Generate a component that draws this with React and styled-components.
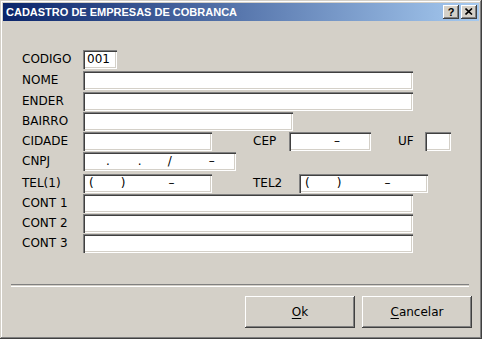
import React from "react";
import styled, { createGlobalStyle } from "styled-components";

const GlobalStyle = createGlobalStyle`
  html, body {
    margin: 0;
    padding: 0;
    background: #d4d0c8;
  }
`;

const Window = styled.div`
  width: 482px;
  height: 339px;
  box-sizing: border-box;
  padding: 3px;
  background: #d4d0c8;
  box-shadow: inset -1px -1px #404040, inset 1px 1px #d4d0c8,
    inset -2px -2px #808080, inset 2px 2px #ffffff;
  display: flex;
  flex-direction: column;
  font-family: "DejaVu Sans", sans-serif;
  font-size: 12px;
  color: #000;
`;

const TitleBar = styled.div`
  height: 18px;
  flex-shrink: 0;
  display: flex;
  align-items: center;
  padding: 0 2px 0 2px;
  background: linear-gradient(to right, #0a246a, #a6caf0);
`;

const Title = styled.div`
  flex: 1;
  color: #fff;
  font-family: "Liberation Sans", Arial, sans-serif;
  font-weight: bold;
  font-size: 11px;
  padding-left: 1px;
  white-space: nowrap;
`;

const CaptionButton = styled.div`
  width: 16px;
  height: 14px;
  margin-left: ${(p) => p.$ml || 0}px;
  box-sizing: border-box;
  background: #d4d0c8;
  box-shadow: inset -1px -1px #404040, inset 1px 1px #ffffff,
    inset -2px -2px #808080, inset 2px 2px #d4d0c8;
  display: flex;
  align-items: center;
  justify-content: center;
  font-family: "Liberation Sans", Arial, sans-serif;
  font-weight: bold;
  font-size: 11px;
  line-height: 12px;
  padding-bottom: 1px;
`;

const Client = styled.div`
  flex: 1;
  display: flex;
  flex-direction: column;
  padding-top: 29px;
`;

const Form = styled.div`
  display: flex;
  flex-direction: column;
  padding-left: 19px;
`;

const Row = styled.div`
  display: flex;
  align-items: center;
  height: 19px;
  margin-top: ${(p) => p.$mt ?? 1}px;
`;

const Label = styled.div`
  width: ${(p) => p.$w || 61}px;
  margin-left: ${(p) => p.$ml || 0}px;
  flex-shrink: 0;
  white-space: nowrap;
  line-height: 19px;
`;

const Field = styled.div`
  width: ${(p) => p.$w}px;
  height: 19px;
  flex-shrink: 0;
  box-sizing: border-box;
  background: #fff;
  box-shadow: inset 1px 1px #808080, inset 2px 2px #404040,
    inset -1px -1px #ffffff, inset -2px -2px #d4d0c8;
  display: flex;
  align-items: center;
  padding-left: 4px;
  white-space: pre;
  line-height: 15px;
`;

const MaskChar = styled.span`
  display: inline-block;
  margin-left: ${(p) => p.$ml}px;
`;

const Separator = styled.div`
  margin: auto 10px 0 8px;
  height: 1px;
  border-top: 1px solid #808080;
  border-bottom: 1px solid #ffffff;
`;

const ButtonBar = styled.div`
  display: flex;
  justify-content: flex-end;
  gap: 7px;
  padding: 9px 7px 8px 0;
`;

const Button = styled.div`
  width: 110px;
  height: 32px;
  box-sizing: border-box;
  background: #d4d0c8;
  box-shadow: inset -1px -1px #404040, inset 1px 1px #ffffff,
    inset -2px -2px #808080, inset 2px 2px #d4d0c8;
  display: flex;
  align-items: center;
  justify-content: center;
`;

const Accel = styled.span`
  text-decoration: underline;
  text-underline-offset: 2px;
`;

// mask: list of [char, offset from previous char]
const Mask = ({ chars }) => (
  <>
    {chars.map(([c, ml], i) => (
      <MaskChar key={i} $ml={ml}>
        {c}
      </MaskChar>
    ))}
  </>
);

export default function App() {
  return (
    <>
      <GlobalStyle />
      <Window>
        <TitleBar>
          <Title>CADASTRO DE EMPRESAS DE COBRANCA</Title>
          <CaptionButton>?</CaptionButton>
          <CaptionButton $ml={2}>
            <svg width="8" height="7" viewBox="0 0 8 7">
              <path d="M0.5 0.5 L7 6.5 M7 0.5 L0.5 6.5" stroke="#000" strokeWidth="1.6" />
            </svg>
          </CaptionButton>
        </TitleBar>
        <Client>
          <Form>
            <Row $mt={0}>
              <Label>CODIGO</Label>
              <Field $w={34}>001</Field>
            </Row>
            <Row $mt={2}>
              <Label>NOME</Label>
              <Field $w={330} />
            </Row>
            <Row $mt={2}>
              <Label>ENDER</Label>
              <Field $w={330} />
            </Row>
            <Row>
              <Label>BAIRRO</Label>
              <Field $w={210} />
            </Row>
            <Row>
              <Label>CIDADE</Label>
              <Field $w={129} />
              <Label $ml={41} $w={36}>CEP</Label>
              <Field $w={82}>
                <Mask chars={[["–", 41]]} />
              </Field>
              <Label $ml={27} $w={27}>UF</Label>
              <Field $w={26} />
            </Row>
            <Row>
              <Label>CNPJ</Label>
              <Field $w={153}>
                <Mask chars={[[".", 19], [".", 28], ["/", 26], ["–", 37]]} />
              </Field>
            </Row>
            <Row $mt={3}>
              <Label>TEL(1)</Label>
              <Field $w={129}>
                <Mask chars={[["(", 2], [")", 27], ["–", 43]]} />
              </Field>
              <Label $ml={41} $w={46}>TEL2</Label>
              <Field $w={129}>
                <Mask chars={[["(", 2], [")", 27], ["–", 43]]} />
              </Field>
            </Row>
            <Row>
              <Label>CONT 1</Label>
              <Field $w={330} />
            </Row>
            <Row>
              <Label>CONT 2</Label>
              <Field $w={330} />
            </Row>
            <Row>
              <Label>CONT 3</Label>
              <Field $w={330} />
            </Row>
          </Form>
          <Separator />
          <ButtonBar>
            <Button>
              <Accel>O</Accel>k
            </Button>
            <Button>
              <Accel>C</Accel>ancelar
            </Button>
          </ButtonBar>
        </Client>
      </Window>
    </>
  );
}
